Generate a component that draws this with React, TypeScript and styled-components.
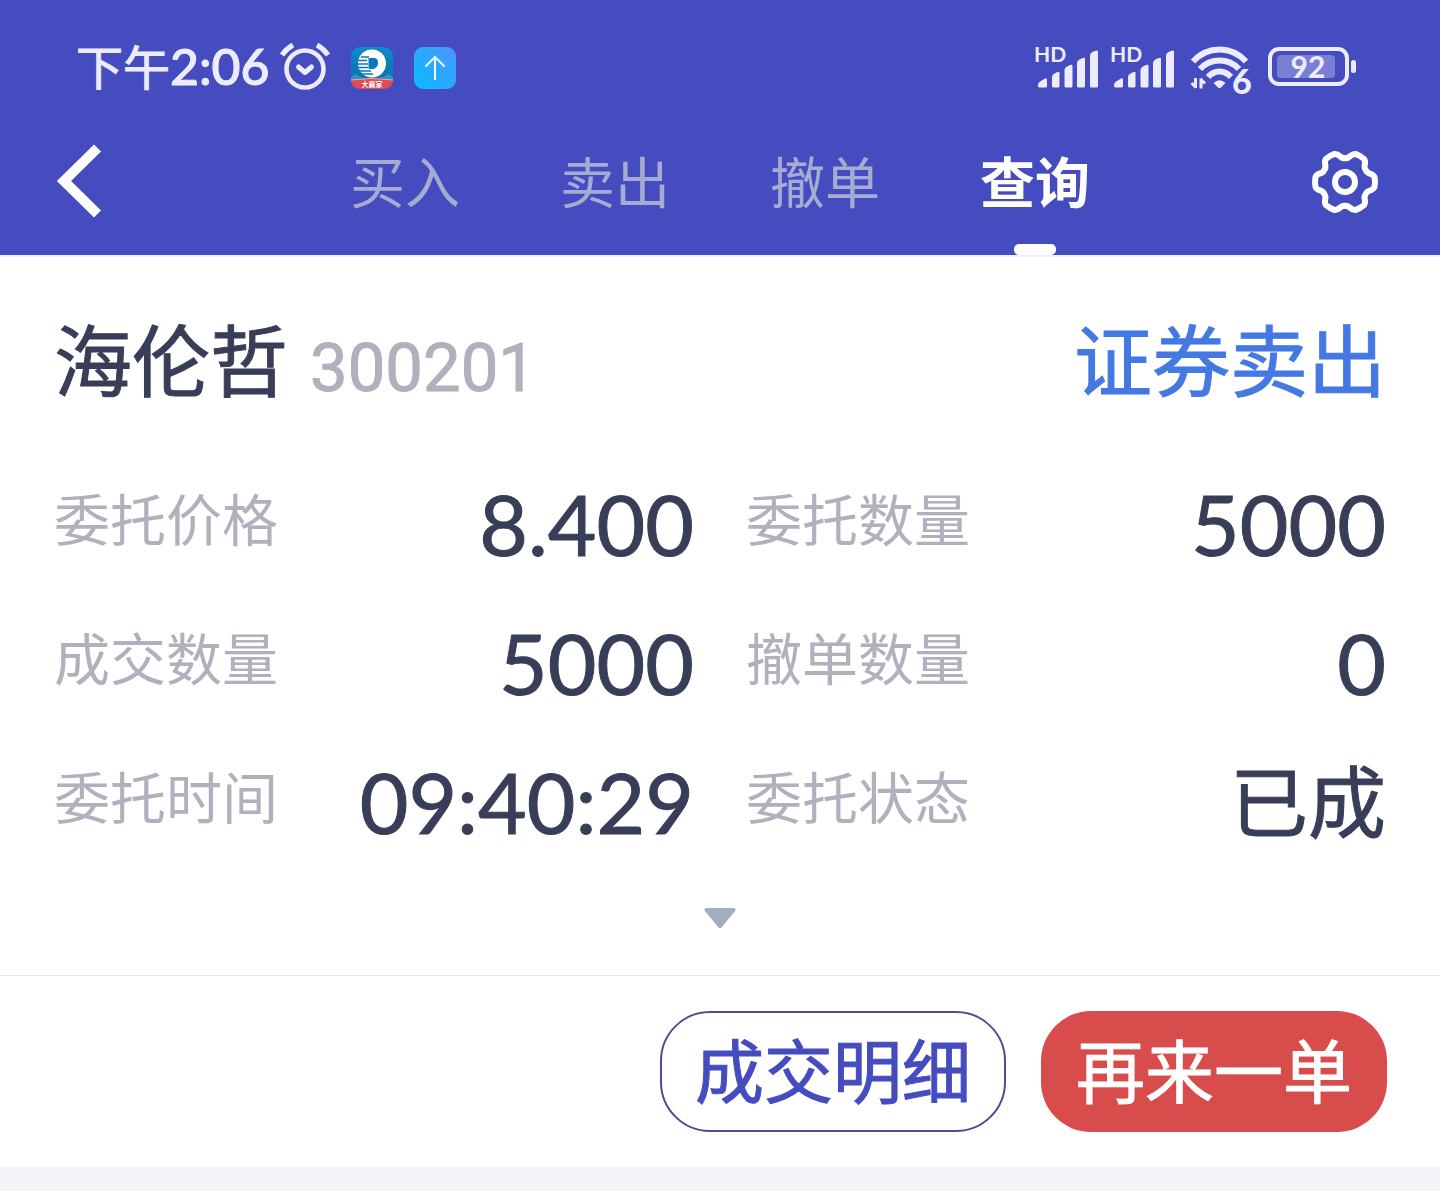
import React from "react";
import styled, { createGlobalStyle } from "styled-components";

const color = {
  brand: "#444cbf",
  status: "#ecebff",
  tab: "#a5abd2",
  ink: "#383e57",
  muted: "#afb1bd",
  link: "#4478e3",
  danger: "#d84c4b",
};

const GlobalStyle = createGlobalStyle`
  *, *::before, *::after { box-sizing: border-box; }
  html { background: #f3f4f7; }
  body { margin: 0; font-family: Lato, "Noto Sans CJK SC", sans-serif; }
  button { font: inherit; cursor: pointer; }
  svg { display: block; flex: none; overflow: visible; }
`;

const Header = styled.header`
  background: ${color.brand};
  border-bottom: 2px solid #eef1fb;
`;

const StatusBar = styled.div`
  display: flex;
  align-items: center;
  justify-content: space-between;
  height: 110px;
  padding: 26px 84px 0 76px;
  color: ${color.status};
`;

const StatusGroup = styled.div<{ $gap: number }>`
  display: flex;
  align-items: center;
  gap: ${(p) => p.$gap}px;
`;

const Clock = styled.time`
  display: flex;
  align-items: baseline;
  padding-bottom: 4px;
  font-size: 50px;
  line-height: 60px;
  font-weight: 500;
  -webkit-text-stroke: 1px;
`;

const Meridiem = styled.span`
  font-size: 47px;
  font-weight: 400;
`;

const NavBar = styled.nav`
  display: grid;
  grid-template-columns: 1fr auto 1fr;
  height: 145px;
  padding: 0 56px;
`;

const IconButton = styled.button<{ $end?: boolean }>`
  display: flex;
  align-items: center;
  align-self: start;
  justify-self: ${(p) => (p.$end ? "end" : "start")};
  height: 142px;
  margin: 0;
  padding: 0;
  border: 0;
  background: none;
`;

const Tabs = styled.div`
  display: flex;
`;

const Tab = styled.button<{ $active?: boolean }>`
  display: flex;
  flex-direction: column;
  align-items: center;
  justify-content: space-between;
  width: 210px;
  padding: 36px 0 0;
  border: 0;
  background: none;
  color: ${(p) => (p.$active ? "#fff" : color.tab)};
  font-size: 55px;
  font-weight: ${(p) => (p.$active ? 700 : 400)};
  line-height: 72px;

  &::after {
    content: "";
    width: 42px;
    height: 11px;
    border-radius: 5px;
    background: ${(p) => (p.$active ? "#fff" : "transparent")};
  }
`;

const Order = styled.article`
  background: #fff;
`;

const OrderBody = styled.div`
  padding: 48px 54px 46px;
  border-bottom: 1px solid #e3e4e8;
`;

const Heading = styled.div`
  display: flex;
  align-items: baseline;
  justify-content: space-between;
  line-height: 112px;
  -webkit-text-stroke: 1px;
`;

const Stock = styled.h1`
  display: flex;
  align-items: baseline;
  gap: 22px;
  margin: 0;
  color: ${color.ink};
  font-size: 78px;
  font-weight: 400;
`;

const Code = styled.span`
  color: ${color.muted};
  font-family: Roboto, sans-serif;
  font-size: 67px;
`;

const Side = styled.span`
  color: ${color.link};
  font-size: 78px;
`;

const Fields = styled.dl`
  display: grid;
  grid-template-columns: 1fr 1fr;
  gap: 49px 52px;
  margin: 55px 0 61px;
`;

const Field = styled.div`
  display: flex;
  align-items: center;
  justify-content: space-between;
  height: 90px;
`;

const Label = styled.dt`
  color: ${color.muted};
  font-size: 56px;
  line-height: 80px;
  padding-bottom: 8px;
`;

const Value = styled.dd<{ $text?: boolean }>`
  margin: 0;
  color: ${color.ink};
  font-size: ${(p) => (p.$text ? 78 : 84)}px;
  font-weight: 400;
  line-height: 90px;
  -webkit-text-stroke: 1px;
`;

const Expand = styled.button`
  display: block;
  margin: 0 auto;
  padding: 0;
  border: 0;
  background: none;
`;

const Actions = styled.footer`
  display: flex;
  justify-content: flex-end;
  gap: 35px;
  padding: 35px 53px;
`;

const Action = styled.button<{ $primary?: boolean }>`
  width: 346px;
  height: 121px;
  padding: 0;
  border: ${(p) => (p.$primary ? "0" : "2px solid #48508f")};
  border-radius: 50px;
  background: ${(p) => (p.$primary ? color.danger : "#fff")};
  color: ${(p) => (p.$primary ? "#fff" : color.brand)};
  -webkit-text-stroke: 1px;
  && { font-size: 69px; line-height: 100px; }
`;

const SvgText = styled.text<{ $size: number; $black?: boolean }>`
  font-family: Lato, "Noto Sans CJK SC", sans-serif;
  font-size: ${(p) => p.$size}px;
  font-weight: ${(p) => (p.$black ? 900 : 700)};
`;

const AlarmIcon = () => (
  <svg width="50" height="48" viewBox="0 0 50 48" fill="none" stroke="currentColor" strokeLinejoin="round">
    <circle cx="25" cy="25" r="18.500" strokeWidth="4.600" />
    <path d="M18.500 23l6.500 5.500 6.500-5.500" strokeWidth="5" strokeLinecap="round" />
    <path d="M2 11Q6 5 13 1M48 11Q44 5 37 1" strokeWidth="5" />
  </svg>
);

const BrokerIcon = () => (
  <svg width="42" height="42" viewBox="0 0 42 42">
    <defs>
      <linearGradient id="broker" x1="0" y1="0" x2="0" y2="1">
        <stop offset="0" stopColor="#0d8bcb" />
        <stop offset="1" stopColor="#0a68ab" />
      </linearGradient>
      <clipPath id="brokerClip">
        <rect width="42" height="42" rx="9" />
      </clipPath>
    </defs>
    <g clipPath="url(#brokerClip)">
      <rect width="42" height="42" fill="url(#broker)" />
      <path d="M0 30l5-3 4 3 6 1h12l6-1 4-3 5 3v5H0z" fill="#2f94c8" />
      <circle cx="21" cy="16.500" r="14" fill="#fff" />
      <path d="M6 13.500h10M6 17h11M6 20.500h11M8 24h12M10 27h12M10 10h8" stroke="#0b78b9" strokeWidth="1.300" />
      <path d="M17.500 11H23q4 0 4 4.500t-4 6.500h-5.500z" fill="#0b78b9" />
      <path d="M0 33q21-3 42 0v9H0z" fill="#e24a50" />
      <path d="M0 33q21-3 42 0" stroke="#e9a4b4" fill="none" />
      <SvgText x="21" y="40" $size={7} textAnchor="middle" fill="#fff">大赢家</SvgText>
    </g>
  </svg>
);

const UploadIcon = () => (
  <svg width="42" height="42" viewBox="0 0 42 42">
    <defs>
      <linearGradient id="upload" x1="0" y1="1" x2="1" y2="0">
        <stop offset="0" stopColor="#08bdff" />
        <stop offset="1" stopColor="#4b94ff" />
      </linearGradient>
    </defs>
    <rect width="42" height="42" rx="9" fill="url(#upload)" />
    <path d="M21 33V10M11.500 19.500L21 10l9.500 9.500" fill="none" stroke="#eefaff" strokeWidth="2" />
  </svg>
);

const SignalIcon = () => (
  <svg width="64" height="44" viewBox="0 0 64 44" fill="currentColor">
    <SvgText x="-1" y="16" $size={21}>HD</SvgText>
    <path d="M3 39.500q0-3 3-4.500l4-2.500q2-.7 2 1V40q0 1.500-1.500 1.500h-6Q3 41.500 3 40z" />
    <path d="M17 31q0-2 2-3.200l3.500-1.800q2-.7 2 1V40q0 1.500-1.500 1.500h-4.500Q17 41.500 17 40z" />
    <path d="M29.500 24q0-2 2-3.200l3.500-1.800q2.500-.7 2.500 1V40q0 1.500-1.500 1.500h-5q-1.500 0-1.500-1.500z" />
    <path d="M42 17q0-2 2-3.200l3.500-1.800q2.500-.7 2.500 1V40q0 1.500-1.500 1.500h-5Q42 41.500 42 40z" />
    <path d="M55 9.500q0-2 2-3.200l3.500-1.600q2.500-.7 2.500 1V40q0 1.500-1.500 1.500h-5Q55 41.500 55 40z" />
  </svg>
);

const WifiIcon = () => (
  <svg width="62" height="52" viewBox="0 -2 62 52" fill="currentColor">
    <g fill="none" stroke="currentColor" strokeWidth="6">
      <path d="M3 17.500Q14 5.500 29.500 5.500T56 17.500" />
      <path d="M10 25Q18 16.500 29.500 16.500T49 25" />
      <path d="M18 33q5-5.500 11.500-5.500T41 33" />
    </g>
    <path d="M23.500 39q6-5.500 12 0l-4.500 4.500q-1.500 1.200-3 0z" />
    <path d="M5.500 34v10M6 43.500L1.500 39M11 44.500v-10M10.500 35l4.500 4.500" fill="none" stroke="currentColor" strokeWidth="3" />
    <SvgText x="42" y="50" $size={34} $black stroke={color.brand} strokeWidth="4" paintOrder="stroke">6</SvgText>
  </svg>
);

const BatteryIcon = () => (
  <svg width="89" height="40" viewBox="-1 1 89 40">
    <rect x="2" y="2" width="77" height="35" rx="9" fill="none" stroke="currentColor" strokeWidth="4" />
    <rect x="9" y="8" width="58" height="23" rx="4" fill="#7a7fd3" />
    <rect x="83" y="13" width="5" height="13" rx="2.500" fill="currentColor" />
    <SvgText x="40" y="30.500" $size={30} textAnchor="middle" fill="currentColor">92</SvgText>
  </svg>
);

const BackIcon = () => (
  <svg width="46" height="74" viewBox="0 0 46 74" fill="none">
    <path d="M41.500 4L8 37l33.500 33" stroke="#fff" strokeWidth="10" />
  </svg>
);

// One tooth and the valley after it, repeated every 60 degrees round the hub.
const gearPath = (() => {
  const at = (x: number, y: number, turn: number) => {
    const a = (-turn * Math.PI) / 3;
    const px = x * Math.cos(a) - y * Math.sin(a);
    const py = x * Math.sin(a) + y * Math.cos(a);
    return `${px.toFixed(2)} ${py.toFixed(2)}`;
  };
  let d = "";
  for (let i = 0; i < 6; i++) {
    d += `${i ? "L" : "M"}${at(29.5, 5, i)}Q${at(30.5, 0, i)} ${at(29.5, -5, i)}`;
    d += `C${at(27, -10, i)} ${at(22.2, -7, i)} ${at(20.8, -12, i)}`;
    d += `C${at(17.2, -15.7, i)} ${at(22.2, -18.4, i)} ${at(29.5, 5, i + 1)}`;
  }
  return d + "Z";
})();

const GearIcon = () => (
  <svg width="74" height="68" viewBox="-35 -35 74 68" fill="none" stroke="#fff" strokeWidth="6" strokeLinejoin="round">
    <path d={gearPath} />
    <circle r="10" />
  </svg>
);

const tabs = ["买入", "卖出", "撤单", "查询"];

const fields = [
  { label: "委托价格", value: "8.400" },
  { label: "委托数量", value: "5000" },
  { label: "成交数量", value: "5000" },
  { label: "撤单数量", value: "0" },
  { label: "委托时间", value: "09:40:29" },
  { label: "委托状态", value: "已成", text: true },
];

export default function App() {
  return (
    <>
      <GlobalStyle />
      <Header>
        <StatusBar>
          <StatusGroup $gap={21}>
            <StatusGroup $gap={10}>
              <Clock>
                <Meridiem>下午</Meridiem>2:06
              </Clock>
              <AlarmIcon />
            </StatusGroup>
            <BrokerIcon />
            <UploadIcon />
          </StatusGroup>
          <StatusGroup $gap={15}>
            <StatusGroup $gap={12}>
              <SignalIcon />
              <SignalIcon />
            </StatusGroup>
            <WifiIcon />
            <BatteryIcon />
          </StatusGroup>
        </StatusBar>
        <NavBar>
          <IconButton aria-label="返回">
            <BackIcon />
          </IconButton>
          <Tabs>
            {tabs.map((name) => (
              <Tab key={name} $active={name === "查询"}>
                {name}
              </Tab>
            ))}
          </Tabs>
          <IconButton $end aria-label="设置">
            <GearIcon />
          </IconButton>
        </NavBar>
      </Header>
      <Order>
        <OrderBody>
          <Heading>
            <Stock>
              海伦哲 <Code>300201</Code>
            </Stock>
            <Side>证券卖出</Side>
          </Heading>
          <Fields>
            {fields.map((f) => (
              <Field key={f.label}>
                <Label>{f.label}</Label>
                <Value $text={f.text}>{f.value}</Value>
              </Field>
            ))}
          </Fields>
          <Expand aria-label="展开">
            <svg width="32" height="21" viewBox="0 0 32 21">
              <path d="M2 0h28q2.500 1 1 3L17.500 19.500q-1.500 1.500-3 0L1 3Q-.5 1 2 0z" fill="#a3adc0" />
            </svg>
          </Expand>
        </OrderBody>
        <Actions>
          <Action>成交明细</Action>
          <Action $primary>再来一单</Action>
        </Actions>
      </Order>
    </>
  );
}
